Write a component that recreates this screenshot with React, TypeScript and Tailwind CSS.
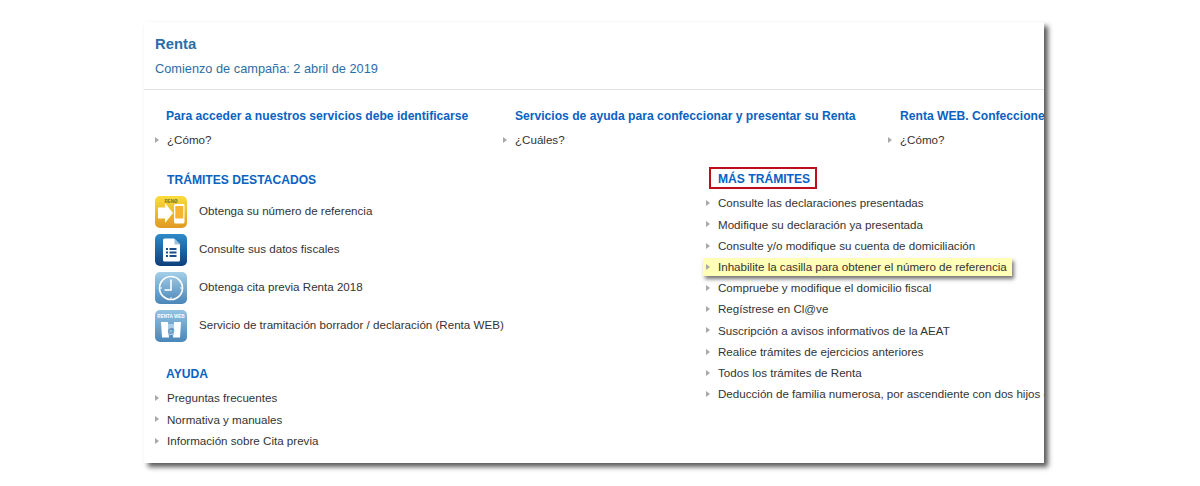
const font = { fontFamily: '"Liberation Sans", Arial, sans-serif' };

function Bullet() {
  return (
    <span className="mr-[8px] h-0 w-0 shrink-0 border-y-[3.5px] border-l-[4px] border-y-transparent border-l-[#a8a8a8]" />
  );
}

function LinkRow({ children, h = "h-[21.2px]" }: { children: React.ReactNode; h?: string }) {
  return (
    <div className={`flex items-center whitespace-nowrap ${h}`}>
      <Bullet />
      <span>{children}</span>
    </div>
  );
}

function IconFrame({ id, from, to, children }: { id: string; from: string; to: string; children: React.ReactNode }) {
  return (
    <svg width="32" height="32" viewBox="0 0 32 32" className="shrink-0">
      <defs>
        <linearGradient id={id} x1="0" y1="0" x2="0" y2="1">
          <stop offset="0" stopColor={from} />
          <stop offset="1" stopColor={to} />
        </linearGradient>
      </defs>
      <rect width="32" height="32" rx="5" fill={`url(#${id})`} />
      {children}
    </svg>
  );
}

function RefIcon() {
  return (
    <IconFrame id="g1" from="#fbdc3c" to="#e09a22">
      <text x="16" y="6.500" fontSize="4.500" fontWeight="700" textAnchor="middle" fill="#5f7a2c">RENØ</text>
      <path d="M3 11.500h7V7l8 10-8 10v-4.500H3z" fill="#fff" />
      <rect x="19" y="8" width="10.500" height="19.500" rx="1.500" fill="#fff" />
      <rect x="20.300" y="10" width="8" height="12.500" fill="#f6b52c" />
    </IconFrame>
  );
}

function DocIcon() {
  return (
    <IconFrame id="g2" from="#2f8bc8" to="#0d3f7c">
      <path d="M9.500 4.500h9.500l6 6v15.500a1.500 1.500 0 0 1-1.500 1.500H9.500A1.500 1.500 0 0 1 8 26V6a1.500 1.500 0 0 1 1.500-1.500z" fill="#fff" />
      <path d="M19.500 4.500v6h6z" fill="#9cc2e0" />
      <path d="M11 14h2v2h-2zM11 17.500h2v2h-2zM11 21h2v2h-2z" fill="#174f8c" />
      <path d="M14.500 14h7v2h-7zM14.500 17.500h7v2h-7zM14.500 21h7v2h-7z" fill="#174f8c" />
    </IconFrame>
  );
}

function ClockIcon() {
  return (
    <IconFrame id="g3" from="#a4cfe8" to="#4a86b8">
      <circle cx="16" cy="16" r="11.500" fill="none" stroke="#fff" strokeWidth="1.600" />
      <path d="M16 7.500V18H9.500" fill="none" stroke="#fff" strokeWidth="1.600" />
      <path d="M16 25v2M5 16h2M25 16h2" stroke="#fff" strokeWidth="1" />
    </IconFrame>
  );
}

function WebIcon() {
  return (
    <IconFrame id="g4" from="#92c3e3" to="#4a86b8">
      <text x="16" y="8" fontSize="4.600" fontWeight="700" textAnchor="middle" fill="#fff">RENTA WEB</text>
      <path d="M6 12h7l1 15.500H7zM26 12h-7l-1 15.500h7z" fill="#fff" />
      <rect x="13" y="14" width="6" height="11" fill="#a9cde6" />
      <text x="16" y="22.500" fontSize="7" textAnchor="middle" fill="#2f6c9e">@</text>
    </IconFrame>
  );
}

const mas = [
  "Consulte las declaraciones presentadas",
  "Modifique su declaración ya presentada",
  "Consulte y/o modifique su cuenta de domiciliación",
  "Inhabilite la casilla para obtener el número de referencia",
  "Compruebe y modifique el domicilio fiscal",
  "Regístrese en Cl@ve",
  "Suscripción a avisos informativos de la AEAT",
  "Realice trámites de ejercicios anteriores",
  "Todos los trámites de Renta",
  "Deducción de familia numerosa, por ascendiente con dos hijos o más",
];

const destacados = [
  { icon: <RefIcon />, text: "Obtenga su número de referencia" },
  { icon: <DocIcon />, text: "Consulte sus datos fiscales" },
  { icon: <ClockIcon />, text: "Obtenga cita previa Renta 2018" },
  { icon: <WebIcon />, text: "Servicio de tramitación borrador / declaración (Renta WEB)" },
];

const tops = [
  { title: "Para acceder a nuestros servicios debe identificarse", link: "¿Cómo?", w: "w-[348px]", pl: "pl-[11px]" },
  { title: "Servicios de ayuda para confeccionar y presentar su Renta", link: "¿Cuáles?", w: "w-[385px]", pl: "pl-[12px]" },
  { title: "Renta WEB. Confeccione y presente su declaración", link: "¿Cómo?", w: "w-[300px]", pl: "pl-[12px]" },
];

export default function App() {
  return (
    <div className="h-[486px] w-[1200px] overflow-hidden bg-white pl-[144px] pt-[22px]" style={font}>
      <div className="h-[441px] w-[900px] overflow-hidden bg-white text-[11.600px] text-[#333] shadow-[4px_4px_5px_rgba(0,0,0,0.65)]">
        <header className="h-[68px] border-b border-[#e2e2e2] px-[11px] pt-[13px] text-[#2b6ea6]">
          <h1 className="text-[14.800px] font-bold leading-[18px]">Renta</h1>
          <p className="mt-[7px] text-[12.770px] leading-[18px]">Comienzo de campaña: 2 abril de 2019</p>
        </header>

        <div className="flex pl-[11px] pt-[17px]">
          {tops.map((t) => (
            <div key={t.title} className={`shrink-0 ${t.w}`}>
              <h2 className={`whitespace-nowrap text-[12.120px] font-bold leading-[18px] text-[#0a62c2] ${t.pl}`}>{t.title}</h2>
              <div className="mt-[6px]">
                <LinkRow h="h-[18px]">{t.link}</LinkRow>
              </div>
            </div>
          ))}
        </div>

        <div className="mt-[18px] flex pl-[11px]">
          <div className="w-[551px] shrink-0">
            <h2 className="pl-[12px] pt-[2px] text-[12.120px] font-bold leading-[22px] text-[#0a62c2]">TRÁMITES DESTACADOS</h2>
            <div className="mt-[5px] flex flex-col gap-[6px]">
              {destacados.map((d) => (
                <div key={d.text} className="flex items-center gap-[12px] whitespace-nowrap">
                  {d.icon}
                  <span className="pb-[2px]">{d.text}</span>
                </div>
              ))}
            </div>
            <h2 className="mt-[21px] pl-[11px] text-[12.120px] font-bold leading-[22px] text-[#0a62c2]">AYUDA</h2>
            <div className="mt-[2.600px]">
              <LinkRow>Preguntas frecuentes</LinkRow>
              <LinkRow>Normativa y manuales</LinkRow>
              <LinkRow>Información sobre Cita previa</LinkRow>
            </div>
          </div>

          <div className="min-w-0 flex-1">
            <h2 className="ml-[3px] inline-block border-2 border-[#c00d1e] pl-[7px] pr-[5px] pt-[3px] text-[12.120px] font-bold leading-[15px] text-[#0a62c2]">MÁS TRÁMITES</h2>
            <div className="mt-[3.600px]">
              {mas.map((m, i) =>
                i === 3 ? (
                  <div key={m} className="flex h-[21.200px] items-center">
                    <div className="-ml-[3px] flex h-[18px] w-[309px] items-center whitespace-nowrap bg-[#ffffb8] pl-[3px] shadow-[2px_3px_4px_rgba(0,0,0,0.55)]">
                      <Bullet />
                      <span>{m}</span>
                    </div>
                  </div>
                ) : (
                  <LinkRow key={m}>{m}</LinkRow>
                )
              )}
            </div>
          </div>
        </div>
      </div>
    </div>
  );
}
